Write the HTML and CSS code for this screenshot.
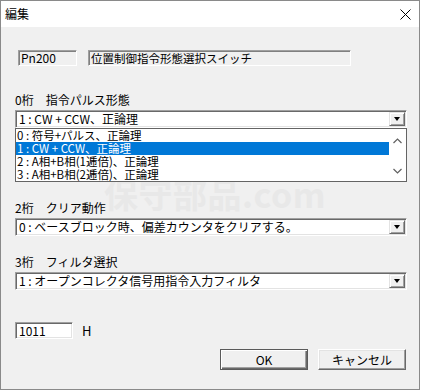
FILE: index.html
```html
<!DOCTYPE html>
<html lang="ja">
<head>
<meta charset="UTF-8">
<title>編集</title>
<link rel="stylesheet" href="styles.css">
</head>
<body>

<div class="window">
  <div class="titlebar">
    <span class="title">編集</span>
    <span class="close">
      <svg width="11" height="11" viewBox="0 0 11 11"><path d="M0.5 0.5 L10.5 10.5 M10.5 0.5 L0.5 10.5" stroke="#000" stroke-width="1" fill="none"/></svg>
    </span>
  </div>

  <div class="client">
    <div class="param-row">
      <div class="static param-no">Pn200</div>
      <div class="static param-name">位置制御指令形態選択スイッチ</div>
    </div>

    <div class="digit digit-first">
      <div class="digit-label">0桁　指令パルス形態</div>
      <div class="combo"><span class="combo-text">1 : CW + CCW、正論理</span><span class="combo-btn"></span></div>
    </div>

    <!-- 1桁: hidden behind the open list -->
    <div class="digit">
      <div class="digit-label"></div>
      <div class="combo"><span class="combo-text"></span><span class="combo-btn"></span></div>
    </div>

    <div class="digit">
      <div class="digit-label">2桁　クリア動作</div>
      <div class="combo"><span class="combo-text">0 : ベースブロック時、偏差カウンタをクリアする。</span><span class="combo-btn"></span></div>
    </div>

    <div class="digit">
      <div class="digit-label">3桁　フィルタ選択</div>
      <div class="combo"><span class="combo-text">1 : オープンコレクタ信号用指令入力フィルタ</span><span class="combo-btn"></span></div>
    </div>

    <div class="value-row">
      <div class="edit">1011</div>
      <span class="unit">H</span>
    </div>

    <div class="buttons">
      <button class="btn btn-default">OK</button>
      <button class="btn">キャンセル</button>
    </div>

    <div class="watermark">保守部品.com</div>

    <!-- open list of the 0桁 combo -->
    <div class="droplist">
      <div class="items">
        <div class="item">0 : 符号+パルス、正論理</div>
        <div class="item selected">1 : CW + CCW、正論理</div>
        <div class="item">2 : A相+B相(1逓倍)、正論理</div>
        <div class="item">3 : A相+B相(2逓倍)、正論理</div>
      </div>
      <div class="scrollbar">
        <svg width="9" height="6" viewBox="0 0 9 6"><path d="M0.5 5 L4.5 1 L8.5 5" stroke="#606060" stroke-width="1.2" fill="none"/></svg>
        <svg width="9" height="6" viewBox="0 0 9 6"><path d="M0.5 1 L4.5 5 L8.5 1" stroke="#606060" stroke-width="1.2" fill="none"/></svg>
      </div>
    </div>
  </div>
</div>

</body>
</html>
```

FILE: styles.css
```css
body {
  margin: 0;
  background: #fff;
  font-family: "Noto Sans CJK JP", sans-serif;
  font-size: 12px;
  color: #000;
}
.window {
  width: 420px;
  height: 390px;
  box-sizing: border-box;
  border: 1px solid #8a8a8a;
  display: flex;
  flex-direction: column;
}
.titlebar {
  height: 26px;
  background: #fff;
  display: flex;
  align-items: center;
  justify-content: space-between;
  padding: 0 8px 0 4px;
}
.title {
  font-size: 12px;
  line-height: 14px;
}
.close {
  display: flex;
}
.client {
  flex: 1;
  position: relative;
  background: #f0f0f0;
  padding: 23px 12px 0 14px;
}
.param-row {
  display: flex;
  gap: 11px;
  margin-left: 3px;
  height: 16px;
}
.static {
  box-sizing: border-box;
  height: 16px;
  border: 1px solid;
  border-color: #a0a0a0 #fff #fff #a0a0a0;
  box-shadow: inset 1px 1px #808080;
  padding: 0 2px;
  line-height: 14px;
  white-space: nowrap;
}
.param-no {
  width: 59px;
}
.param-name {
  width: 263px;
  font-size: 11.5px;
}
.digit {
  margin-bottom: 19px;
}
.digit-first {
  margin-top: 27px;
}
.digit-label {
  height: 14px;
  line-height: 14px;
  margin-bottom: 3px;
  white-space: pre;
}
.combo {
  height: 18px;
  box-sizing: border-box;
  background: #fff;
  border: 1px solid;
  border-color: #a0a0a0 #fff #fff #a0a0a0;
  box-shadow: inset 1px 1px #696969, inset -1px -1px #e3e3e3;
  padding: 1px 1px 1px 3px;
  display: flex;
  align-items: center;
}
.combo-text {
  flex: 1;
  line-height: 14px;
  white-space: nowrap;
}
.combo-btn {
  width: 16px;
  height: 14px;
  box-sizing: border-box;
  background: #f0f0f0;
  border: 1px solid;
  border-color: #e3e3e3 #696969 #696969 #e3e3e3;
  box-shadow: inset 1px 1px #fff, inset -1px -1px #a0a0a0;
  display: flex;
  align-items: center;
  justify-content: center;
}
.combo-btn::after {
  content: "";
  border-left: 3.5px solid transparent;
  border-right: 3.5px solid transparent;
  border-top: 4px solid #000;
}
.value-row {
  margin-top: 31px;
  display: flex;
  align-items: center;
  gap: 9px;
}
.edit {
  width: 58px;
  height: 17px;
  box-sizing: border-box;
  background: #fff;
  border: 1px solid;
  border-color: #a0a0a0 #fff #fff #a0a0a0;
  box-shadow: inset 1px 1px #696969, inset -1px -1px #e3e3e3;
  padding: 0 3px;
  line-height: 15px;
}
.unit {
  font-size: 13px;
}
.buttons {
  margin-top: 9px;
  margin-right: 1px;
  display: flex;
  justify-content: flex-end;
  gap: 10px;
}
.btn {
  width: 88px;
  height: 21px;
  box-sizing: border-box;
  font-family: inherit;
  font-size: 12px;
  padding: 0;
  background: #f0f0f0;
  border: 1px solid;
  border-color: #fff #696969 #696969 #fff;
  box-shadow: inset -1px -1px #a0a0a0, inset 1px 1px #e3e3e3;
  color: #000;
}
.btn-default {
  border-color: #5a5a5a;
  box-shadow: inset 1px 1px #fff, inset -1px -1px #696969, inset -2px -2px #a0a0a0;
}
.watermark {
  position: absolute;
  left: 103px;
  top: 150px;
  font-size: 34px;
  font-weight: bold;
  line-height: 1;
  color: #e8e8e8;
  letter-spacing: 0.5px;
  white-space: nowrap;
}
.droplist {
  position: absolute;
  left: 14px;
  top: 101px;
  width: 392px;
  height: 54px;
  box-sizing: border-box;
  border: 1px solid #646464;
  background: #fff;
  display: flex;
}
.items {
  flex: 1;
}
.item {
  height: 13px;
  line-height: 13px;
  font-size: 11.5px;
  padding-left: 1px;
  white-space: nowrap;
}
.item.selected {
  background: #0078d7;
  color: #fff;
}
.scrollbar {
  width: 17px;
  display: flex;
  flex-direction: column;
  justify-content: space-between;
  align-items: center;
  padding: 9px 0 7px;
}
```
